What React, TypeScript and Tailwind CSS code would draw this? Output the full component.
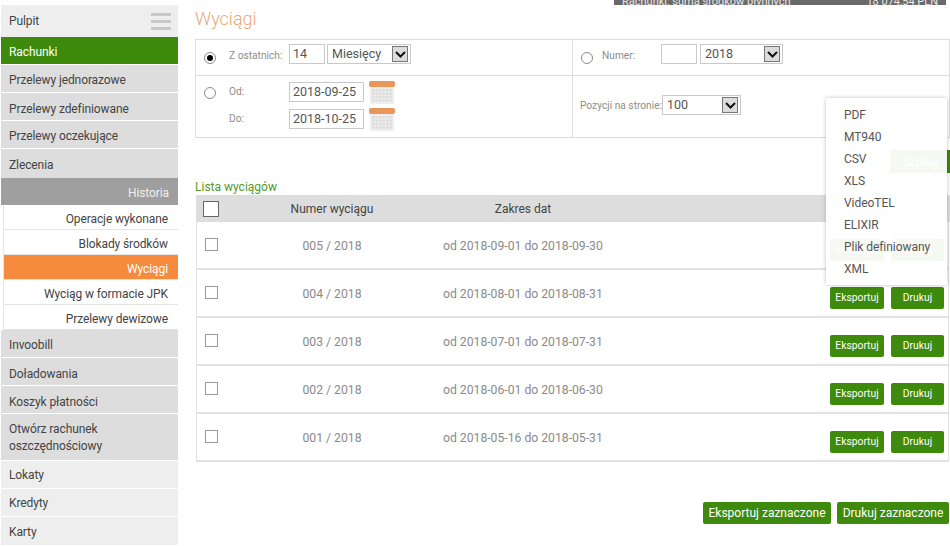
const F = "font-['Roboto',sans-serif]";

function Cal() {
  return (
    <svg width="26" height="23" viewBox="0 0 26 23" className="block">
      <rect x="1" y="5" width="24" height="18" fill="#eeeeee" />
      <g fill="#dcdcdc">
        {[0, 1, 2, 3, 4, 5].map((c) =>
          [0, 1, 2, 3].map((r) => <rect key={c + "-" + r} x={3 + c * 3.5} y={8 + r * 3.4} width="2.6" height="2.4" />)
        )}
      </g>
      <rect x="0" y="0" width="26" height="6" rx="2" fill="#e8965a" />
    </svg>
  );
}

function Radio({ on, className = "" }: { on?: boolean; className?: string }) {
  return (
    <span className={"flex h-[12px] w-[12px] shrink-0 items-center justify-center rounded-full border border-[#8a8a8a] bg-white " + className}>
      {on && <span className="h-[6px] w-[6px] rounded-full bg-black" />}
    </span>
  );
}

function Select({ value, w }: { value: string; w: string }) {
  return (
    <span className={"flex h-[20px] items-center justify-between border border-[#c9c9c9] bg-white pl-[4px] pr-[2px] text-[12.5px] leading-none text-[#555] " + w}>
      {value}
      <span className="flex h-[16px] w-[16px] items-center justify-center border border-[#777] bg-[#dcdcdc]">
        <svg width="11" height="7" viewBox="0 0 11 7" fill="none" stroke="#111" strokeWidth="2">
          <path d="M1 1l4.5 4.5L10 1" />
        </svg>
      </span>
    </span>
  );
}

function Input({ value, w }: { value?: string; w: string }) {
  return (
    <span className={"flex h-[20px] items-center border border-[#c9c9c9] bg-white pl-[3px] text-[12.5px] leading-none text-[#555] " + w}>{value}</span>
  );
}

function Side({ label, cls, h }: { label: string; cls: string; h: string }) {
  return <div className={"flex items-center pl-[8px] text-[12px] tracking-[-0.1px] text-[#444] " + cls + " " + h}>{label}</div>;
}

function Sub({ label, active }: { label: string; active?: boolean }) {
  return (
    <div
      className={
        "ml-[2px] flex h-[25px] items-center justify-end border-b border-l border-[#e4e4e4] pr-[10px] pt-[3px] text-[12px] tracking-[-0.1px] " +
        (active ? "bg-[#f68b3d] text-white" : "bg-white text-[#444]")
      }
    >
      {label}
    </div>
  );
}

const rows = [
  ["005 / 2018", "od 2018-09-01 do 2018-09-30"],
  ["004 / 2018", "od 2018-08-01 do 2018-08-31"],
  ["003 / 2018", "od 2018-07-01 do 2018-07-31"],
  ["002 / 2018", "od 2018-06-01 do 2018-06-30"],
  ["001 / 2018", "od 2018-05-16 do 2018-05-31"],
];

const menu = ["PDF", "MT940", "CSV", "XLS", "VideoTEL", "ELIXIR", "Plik definiowany", "XML"];

export default function App() {
  return (
    <div className={"relative flex h-[546px] w-[950px] overflow-hidden bg-white " + F}>
      <aside className="ml-[1px] mt-[5px] flex w-[177px] shrink-0 flex-col">
        <div className="flex h-[32px] items-center justify-between bg-[#eeeeee] pl-[8px] pr-[7px] text-[12px] tracking-[-0.1px] text-[#444]">
          Pulpit
          <span className="flex w-[20px] flex-col gap-[4px]">
            <span className="h-[3px] bg-[#c8c8c8]" />
            <span className="h-[3px] bg-[#c8c8c8]" />
            <span className="h-[3px] bg-[#c8c8c8]" />
          </span>
        </div>
        <Side label="Rachunki" cls="bg-[#3d8a0c] !text-white mb-[1px] pt-[3px]" h="h-[27px]" />
        <Side label="Przelewy jednorazowe" cls="bg-[#dddddd] mb-[1px] pt-[3px]" h="h-[27px]" />
        <Side label="Przelewy zdefiniowane" cls="bg-[#dddddd] mb-[1px] pt-[4px]" h="h-[27px]" />
        <Side label="Przelewy oczekujące" cls="bg-[#dddddd] mb-[1px] pt-[3px]" h="h-[27px]" />
        <Side label="Zlecenia" cls="bg-[#dddddd] pt-[3px]" h="h-[29px]" />
        <div className="flex h-[27px] items-center justify-end bg-[#9f9f9f] pr-[9px] pt-[2px] text-[12px] tracking-[-0.1px] text-[#eeeeee]">Historia</div>
        <Sub label="Operacje wykonane" />
        <Sub label="Blokady środków" />
        <Sub label="Wyciągi" active />
        <Sub label="Wyciąg w formacie JPK" />
        <Sub label="Przelewy dewizowe" />
        <Side label="Invoobill" cls="bg-[#dddddd] mb-[1px] pt-[3px]" h="h-[27px]" />
        <Side label="Doładowania" cls="bg-[#dddddd] mb-[1px] pt-[4px]" h="h-[27px]" />
        <Side label="Koszyk płatności" cls="bg-[#dddddd] mb-[1px] pt-[4px]" h="h-[27px]" />
        <div className="mb-[1px] bg-[#dddddd] pb-[5px] pl-[8px] pt-[7px] text-[12px] leading-[17px] tracking-[-0.1px] text-[#444]">
          Otwórz rachunek
          <br />
          oszczędnościowy
        </div>
        <Side label="Lokaty" cls="bg-[#eeeeee] mb-[1px] pt-[1px]" h="h-[27px]" />
        <Side label="Kredyty" cls="bg-[#eeeeee] mb-[1px] pt-[1px]" h="h-[27px]" />
        <Side label="Karty" cls="bg-[#eeeeee] pt-[1px]" h="h-[28px]" />
      </aside>

      <main className="ml-[17px] flex w-[755px] flex-col">
        <div className="flex h-[39px] items-start">
          <h1 className="mt-[7px] text-[18px] font-light leading-[24px] text-[#e8a878]">Wyciągi</h1>
        </div>
        <div className="grid h-[99px] grid-cols-[377px_1fr] grid-rows-[36px_1fr] border border-[#dcdcdc] text-[10.2px] text-[#8c8c8c]">
          <div className="flex items-start border-r border-b border-[#dcdcdc] pl-[8px] pt-[4px]">
            <Radio on className="mt-[8px]" />
            <span className="ml-[13px] mt-[4px] w-[60px] whitespace-nowrap">Z ostatnich:</span>
            <Input value="14" w="w-[36px]" />
            <span className="w-[2px]" />
            <Select value="Miesięcy" w="w-[84px]" />
          </div>
          <div className="flex items-start border-b border-[#dcdcdc] pl-[8px] pt-[4px]">
            <Radio className="mt-[8px]" />
            <span className="ml-[9px] mt-[4px] w-[59px]">Numer:</span>
            <Input w="w-[36px]" />
            <span className="w-[3px]" />
            <Select value="2018" w="w-[83px]" />
          </div>
          <div className="flex border-r border-[#dcdcdc] pl-[8px] pt-[6px]">
            <Radio className="mt-[5px]" />
            <div className="ml-[13px] flex flex-col gap-[6px]">
              <div className="flex items-start">
                <span className="mt-[2px] w-[60px]">Od:</span>
                <Input value="2018-09-25" w="w-[75px]" />
                <span className="ml-[5px] -mt-[1px] h-[22px]"><Cal /></span>
              </div>
              <div className="flex items-start">
                <span className="mt-[2px] w-[60px]">Do:</span>
                <Input value="2018-10-25" w="w-[75px]" />
                <span className="ml-[5px] -mt-[1px] h-[22px]"><Cal /></span>
              </div>
            </div>
          </div>
          <div className="flex items-start pl-[7px] pt-[19px]">
            <span className="mt-[3px] w-[82px] whitespace-nowrap">Pozycji na stronie:</span>
            <Select value="100" w="w-[79px]" />
          </div>
        </div>

        <div className="mt-[12px] flex justify-end">
          <span className="flex h-[23px] w-[60px] items-center justify-center bg-[#3d8a0c] text-[12px] text-white">Szukaj</span>
        </div>
        <div className="mt-[7px] h-[15px] text-[12px] leading-[15px] text-[#4f9a2a]">Lista wyciągów</div>
        <div className="ml-[1px] flex h-[27px] items-center bg-[#dddddd] text-[12px] text-[#444]">
          <span className="ml-[7px] h-[16px] w-[16px] border border-[#666] bg-white" />
          <span className="ml-[7px] w-[212px] text-center">Numer wyciągu</span>
          <span className="w-[170px] text-center">Zakres dat</span>
        </div>
        <div className="ml-[1px] mr-[1px] flex flex-col border-x border-b-0 border-[#e2e2e2]">
          {rows.map((r) => (
            <div key={r[0]} className="flex h-[48px] items-start border-b-2 border-[#e2e2e2] text-[12.2px] text-[#8a8a8a]">
              <span className="ml-[8px] mt-[16px] h-[13px] w-[13px] border border-[#9a9a9a] bg-white" />
              <span className="ml-[8px] mt-[16px] w-[212px] text-center leading-[16px]">{r[0]}</span>
              <span className="ml-[5px] mt-[16px] w-[300px] leading-[16px]">{r[1]}</span>
              <span className="ml-auto mr-[4px] mt-[17px] flex gap-[7px]">
                <span className="flex h-[22px] w-[54px] items-center justify-center rounded-[2px] bg-[#3d8a0c] text-[10.3px] text-white">Eksportuj</span>
                <span className="flex h-[22px] w-[53px] items-center justify-center rounded-[2px] bg-[#3d8a0c] text-[10.3px] text-white">Drukuj</span>
              </span>
            </div>
          ))}
        </div>
        <div className="mt-[40px] mr-[1px] flex justify-end gap-[6px]">
          <span className="flex h-[22px] w-[128px] items-center justify-center rounded-[2px] bg-[#3d8a0c] text-[12px] text-white">Eksportuj zaznaczone</span>
          <span className="flex h-[22px] w-[112px] items-center justify-center rounded-[2px] bg-[#3d8a0c] text-[12px] text-white">Drukuj zaznaczone</span>
        </div>
      </main>

      <div className="absolute left-[614px] top-0 flex h-[5px] w-[332px] justify-between overflow-hidden bg-[#6a6a6a] px-[8px] text-[11px] leading-[5px] text-[#e8e8e8]">
        <span className="-mt-[1px]">Rachunki: suma środków płynnych</span>
        <span className="-mt-[1px]">18 074,54 PLN</span>
      </div>

      <div className="absolute left-[826px] top-[98px] flex h-[187px] w-[121px] flex-col rounded-[2px] bg-white/95 pt-[6px] shadow-[0_0_4px_rgba(0,0,0,0.25)]">
        {menu.map((m) => (
          <div key={m} className="flex h-[22px] items-center pl-[18px] text-[12px] tracking-[-0.05px] text-[#555]">
            {m}
          </div>
        ))}
      </div>
    </div>
  );
}
